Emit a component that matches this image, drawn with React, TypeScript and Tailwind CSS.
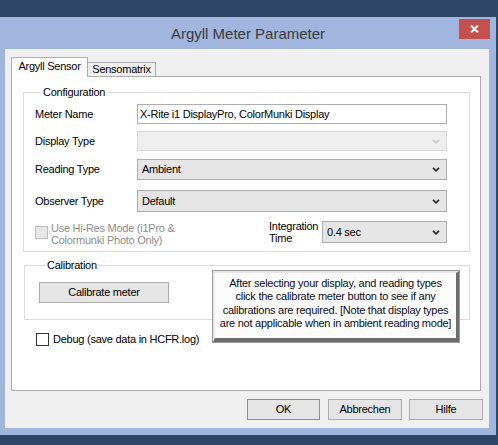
import React from "react";

const FONT = "font-['Liberation_Sans',Arial,sans-serif]";

function Chevron({ disabled }: { disabled?: boolean }) {
  return (
    <svg width="8" height="5" viewBox="0 0 8 5">
      <path
        d="M1 0.8 L4 3.8 L7 0.8"
        fill="none"
        stroke={disabled ? "#c9c9c9" : "#2a2a2a"}
        strokeWidth="1.7"
      />
    </svg>
  );
}

function Combo({
  value,
  disabled,
  className,
}: {
  value?: string;
  disabled?: boolean;
  className?: string;
}) {
  return (
    <div
      className={`flex items-center justify-between border pl-[4px] pr-[6px] ${
        disabled ? "border-[#d9d9d9] bg-[#efefef]" : "border-[#acacac] bg-[#e5e5e5]"
      } ${className ?? ""}`}
    >
      <span>{value}</span>
      <Chevron disabled={disabled} />
    </div>
  );
}

function Row({
  label,
  children,
  className,
}: {
  label: string;
  children: React.ReactNode;
  className?: string;
}) {
  return (
    <div className={`flex items-center ${className ?? ""}`}>
      <div className="w-[102px] shrink-0">{label}</div>
      <div className="flex-1 h-full">{children}</div>
    </div>
  );
}

function Button({ label, primary, className }: { label: string; primary?: boolean; className?: string }) {
  return (
    <div
      className={`flex items-center justify-center border bg-[#e5e5e5] ${
        primary ? "border-[#5b9bd5]" : "border-[#acacac]"
      } ${className ?? ""}`}
    >
      {label}
    </div>
  );
}

export default function App() {
  return (
    <div
      className={`${FONT} w-[498px] h-[445px] overflow-hidden bg-[#2f4766] text-[11px] tracking-[-0.25px] leading-[13px] text-black`}
    >
      <div className="h-[17px]" />
      <div className="w-[496px] bg-[#a0b6df] flex flex-col">
        {/* Title bar */}
        <div className="h-[32px] grid grid-cols-[1fr_auto_1fr]">
          <div />
          <div className="flex items-center text-[15px] tracking-normal text-[#3a3a3a] pt-[1px]">
            Argyll Meter Parameter
          </div>
          <div className="flex justify-end items-start pt-[2px] pr-[6px]">
            <div className="w-[31px] h-[20px] bg-[#c8504c] flex items-center justify-center">
              <svg width="9" height="8" viewBox="0 0 9 8">
                <path d="M1 0.5 L8 7.5 M8 0.5 L1 7.5" stroke="#ffffff" strokeWidth="2" />
              </svg>
            </div>
          </div>
        </div>

        {/* Client area */}
        <div className="ml-[5px] w-[484px] h-[379px] bg-[#f0f0f0] flex flex-col">
          {/* Tabs */}
          <div className="mt-[8px] ml-[6px] flex items-end h-[19px]">
            <div className="relative z-10 -mb-px h-[20px] w-[77px] bg-white border-l border-t border-r border-[#acacac] flex items-center justify-center pb-[2px]">
              Argyll Sensor
            </div>
            <div className="h-[14px] w-[68px] bg-[#f0f0f0] border-t border-r border-[#acacac] flex items-center justify-center">
              Sensomatrix
            </div>
          </div>

          {/* Panel */}
          <div className="ml-[6px] w-[470px] h-[315px] bg-white border border-[#acacac] flex flex-col">
            {/* Configuration */}
            <fieldset className="mt-[8px] ml-[11px] mr-[10px] border border-[#dcdcdc] pl-[11px] pr-[22px] pb-[7px]">
              <legend className="ml-[6px] px-[2px] leading-[14px]">Configuration</legend>
              <Row label="Meter Name" className="mt-[5px] h-[20px]">
                <div className="h-full border border-[#abadb3] bg-white flex items-center pl-[2px]">
                  X-Rite i1 DisplayPro, ColorMunki Display
                </div>
              </Row>
              <Row label="Display Type" className="mt-[7px] h-[20px]">
                <Combo disabled className="h-full" />
              </Row>
              <Row label="Reading Type" className="mt-[8px] h-[21px]">
                <Combo value="Ambient" className="h-full" />
              </Row>
              <Row label="Observer Type" className="mt-[10px] h-[22px]">
                <Combo value="Default" className="h-full" />
              </Row>
              <div className="mt-[8px] h-[24px] flex items-center">
                <div className="flex items-center">
                  <div className="w-[13px] h-[13px] border border-[#bcbcbc] bg-[#e6e6e6]" />
                  <div className="ml-[3px] w-[125px] leading-[12px] text-[#8d8d8d] pt-[3px]">
                    Use Hi-Res Mode (i1Pro &amp; Colormunki Photo Only)
                  </div>
                </div>
                <div className="ml-auto flex items-center h-full">
                  <div className="w-[53px] leading-[12px]">
                    Integration
                    <br />
                    Time
                  </div>
                  <Combo value="0.4 sec" className="w-[125px] h-[22px]" />
                </div>
              </div>
            </fieldset>

            {/* Calibration */}
            <div className="relative mt-[6px] ml-[12px] mr-[10px]">
              <fieldset className="border border-[#dcdcdc] pl-[14px] pb-[16px]">
                <legend className="ml-[6px] px-[2px] leading-[14px]">Calibration</legend>
                <Button label="Calibrate meter" className="mt-[10px] w-[130px] h-[21px]" />
              </fieldset>
              <div className="absolute left-[188px] top-[12px] w-[248px] h-[73px] border border-[#9a9a9a]">
                <div className="h-full border-l-2 border-t-2 border-r-[3px] border-b-[4px] border-l-[#e8e8e8] border-t-[#e8e8e8] border-r-[#6d6d6d] border-b-[#6d6d6d] bg-[#fcfcfc] text-center pt-[4px] leading-[13.4px] text-[#0c0c24]">
                  After selecting your display, and reading types
                  <br />
                  click the calibrate meter button to see if any
                  <br />
                  calibrations are required. [Note that display types
                  <br />
                  are not applicable when in ambient reading mode]
                </div>
              </div>
            </div>

            {/* Debug */}
            <div className="mt-[13px] ml-[24px] flex items-center">
              <div className="w-[13px] h-[13px] border border-[#333333] bg-white" />
              <div className="ml-[4px]">Debug (save data in HCFR.log)</div>
            </div>
          </div>

          {/* Buttons */}
          <div className="mt-[8px] pr-[6px] flex justify-end">
            <Button label="OK" primary className="w-[73px] h-[21px]" />
            <Button label="Abbrechen" className="ml-[8px] w-[74px] h-[21px]" />
            <Button label="Hilfe" className="ml-[7px] w-[74px] h-[21px]" />
          </div>
        </div>
        <div className="h-[7px]" />
      </div>
    </div>
  );
}
